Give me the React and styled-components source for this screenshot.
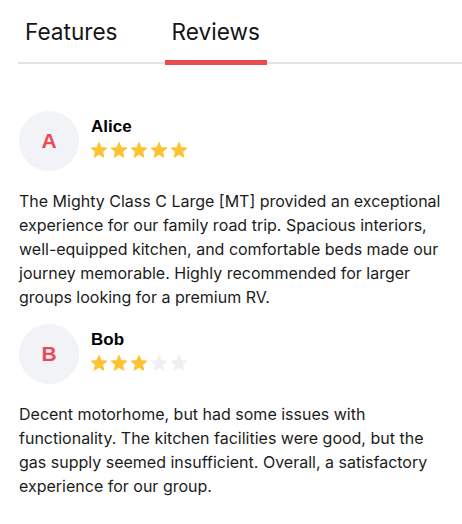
import React from "react";
import styled, { createGlobalStyle } from "styled-components";

const GlobalStyle = createGlobalStyle`
  body {
    margin: 0;
    background: #ffffff;
    font-family: Inter, "Noto Sans", sans-serif;
    color: #1c1c1c;
  }
`;

const Page = styled.div`
  padding-left: 18px;
  overflow: hidden;
`;

const TabList = styled.div`
  display: flex;
  gap: 40px;
  border-bottom: 2px solid #e2e2e2;
`;

const Tab = styled.div`
  position: relative;
  padding: 18px 7px 17px;
  font-size: 22.6px;
  color: #151515;
  cursor: pointer;

  &::after {
    content: "";
    display: ${(p) => (p.$active ? "block" : "none")};
    position: absolute;
    left: 0;
    right: 0;
    bottom: -3px;
    height: 5px;
    background: #e84b50;
  }
`;

const ReviewList = styled.div`
  padding: 47px 20px 0 1px;
  display: flex;
  flex-direction: column;
  gap: 15px;
`;

const Review = styled.div``;

const Header = styled.div`
  display: flex;
  gap: 12px;
  margin-bottom: 18px;
`;

const Avatar = styled.div`
  width: 60px;
  height: 60px;
  border-radius: 50%;
  background: #f2f3f7;
  display: flex;
  align-items: center;
  justify-content: center;
  font-family: "Liberation Sans", Arial, sans-serif;
  font-weight: bold;
  font-size: 21px;
  color: #e84b55;
  flex-shrink: 0;
`;

const Info = styled.div`
  padding-top: 6px;
  display: flex;
  flex-direction: column;
  gap: 5px;
`;

const Name = styled.div`
  font-family: "Liberation Sans", Arial, sans-serif;
  font-weight: bold;
  font-size: 17px;
  color: #000;
`;

const Stars = styled.div`
  display: flex;
  gap: 4px;
`;

const Text = styled.p`
  margin: 0;
  font-size: 16px;
  line-height: 24px;
  color: #1c1c1c;
`;

const StarIcon = ({ filled }) => (
  <svg width="16" height="16" viewBox="2 2 20 19.5">
    <path
      d="M12 17.27L18.18 21l-1.64-7.03L22 9.24l-7.19-.61L12 2 9.19 8.63 2 9.24l5.46 4.73L5.82 21z"
      fill={filled ? "#fcc331" : "#eff0f4"}
      stroke={filled ? "#fcc331" : "#eff0f4"}
      strokeWidth="1"
      strokeLinejoin="round"
    />
  </svg>
);

const reviews = [
  {
    name: "Alice",
    rating: 5,
    text: "The Mighty Class C Large [MT] provided an exceptional experience for our family road trip. Spacious interiors, well-equipped kitchen, and comfortable beds made our journey memorable. Highly recommended for larger groups looking for a premium RV.",
  },
  {
    name: "Bob",
    rating: 3,
    text: "Decent motorhome, but had some issues with functionality. The kitchen facilities were good, but the gas supply seemed insufficient. Overall, a satisfactory experience for our group.",
  },
];

export default function App() {
  return (
    <Page>
      <GlobalStyle />
      <TabList>
        <Tab>Features</Tab>
        <Tab $active>Reviews</Tab>
      </TabList>
      <ReviewList>
        {reviews.map((r) => (
          <Review key={r.name}>
            <Header>
              <Avatar>{r.name[0]}</Avatar>
              <Info>
                <Name>{r.name}</Name>
                <Stars>
                  {[1, 2, 3, 4, 5].map((i) => (
                    <StarIcon key={i} filled={i <= r.rating} />
                  ))}
                </Stars>
              </Info>
            </Header>
            <Text>{r.text}</Text>
          </Review>
        ))}
      </ReviewList>
    </Page>
  );
}
